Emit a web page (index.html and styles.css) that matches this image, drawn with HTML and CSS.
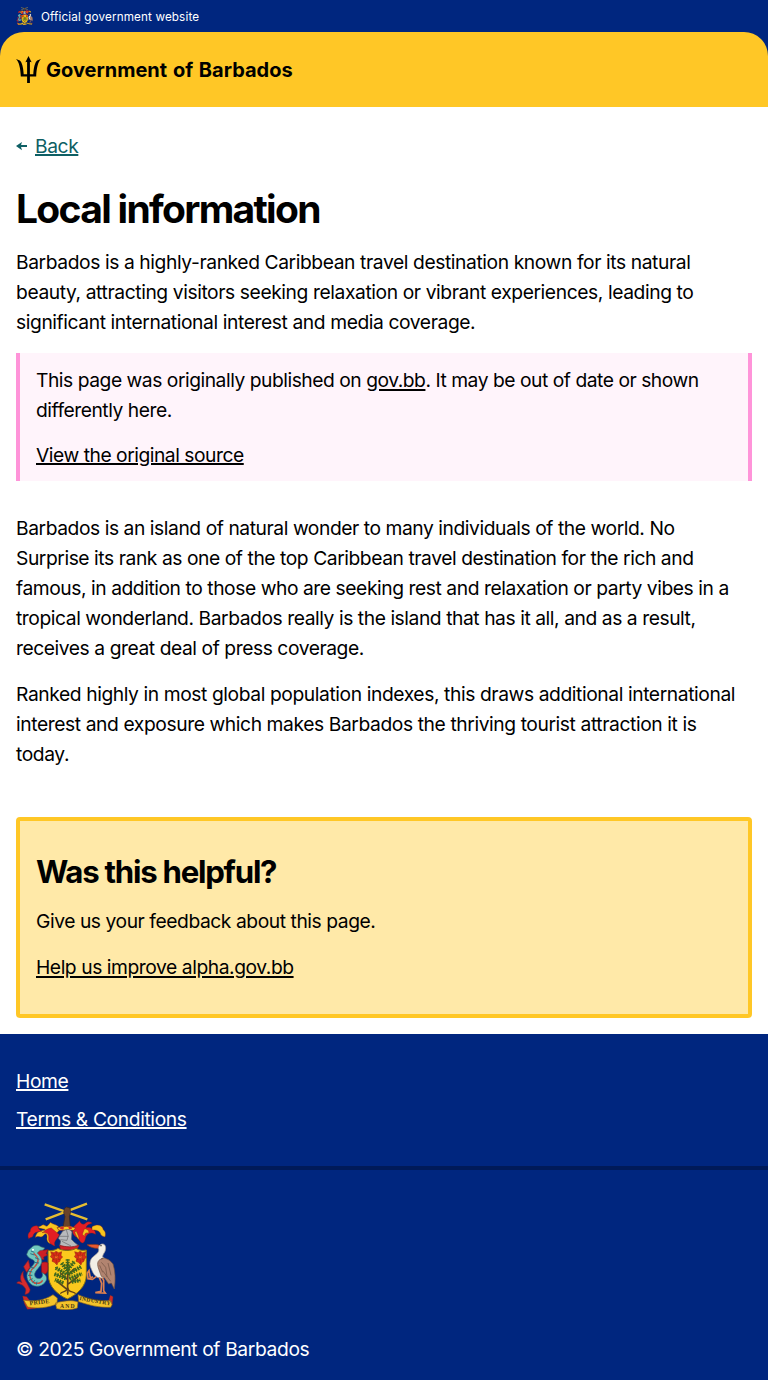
FILE: index.html
```html
<!DOCTYPE html>
<html lang="en">
<head>
<meta charset="utf-8">
<title>Local information</title>
<link rel="stylesheet" href="styles.css">
</head>
<body>
<div class="official"><svg class="mini-arms" viewBox="30 24 300 324" aria-hidden="true"><use href="#arms"/></svg><span>Official government website</span></div>
<div class="header-back"><header class="header">
  <svg class="trident" viewBox="0 0 25 27" aria-hidden="true"><path d="M12.5 0L9.4 6.3l1.7-.5v12.5H7.7C7.3 11 5.9 6.2 3.8 4.5L0 3c3 3 4.5 9 4.8 17.4h6.3V27h2.8v-6.6h6.3C20.5 12 22 6 25 3l-3.8 1.5c-2.1 1.7-3.5 6.5-3.9 13.8h-3.4V5.8l1.7.5z"/></svg>
  <span class="brand">Government of Barbados</span>
</header></div>
<main class="content">
  <nav class="back"><svg viewBox="0 0 12 10" aria-hidden="true"><path d="M0 5l6.5-4.5-1 3.3H12v2.4H5.5l1 3.3z"/></svg><a href="#">Back</a></nav>
  <h1>Local information</h1>
  <p class="lead">Barbados is a highly-ranked Caribbean travel destination known for its natural beauty, attracting visitors seeking relaxation or vibrant experiences, leading to significant international interest and media coverage.</p>
  <aside class="notice"><p>This page was originally published on <a class="low" href="#">gov.bb</a>. It may be out of date or shown differently here.</p><p><a href="#">View the original source</a></p></aside>
  <article class="article"><p>Barbados is an island of natural wonder to many individuals of the world. No Surprise its rank as one of the top Caribbean travel destination for the rich and famous, in addition to those who are seeking rest and relaxation or party vibes in a tropical wonderland. Barbados really is the island that has it all, and as a result, receives a great deal of press coverage.</p><p>Ranked highly in most global population indexes, this draws additional international interest and exposure which makes Barbados the thriving tourist attraction it is today.</p></article>
  <section class="feedback"><h2>Was this helpful?</h2><p>Give us your feedback about this page.</p><p><a class="low" href="#">Help us improve alpha.gov.bb</a></p></section>
</main>
<footer>
  <nav class="footer-links"><a href="#">Home</a><a href="#">Terms &amp; Conditions</a></nav>
  <div class="footer-bottom"><svg class="coat" viewBox="30 24 300 324" role="img" aria-label="Coat of arms"><g id="arms">
    <g stroke="#e5bd32" stroke-width="7"><path d="M116 31L244 76M119 76L243 29"/></g>
    <path d="M175 44l6-5 11 3 2 12-4 14 3 32h-22l6-32-4-12z" fill="#69432a" stroke="#38251b" stroke-width="2"/>
    <g stroke="#812018" stroke-width="1.2">
      <path d="M163 105c-9-16-25-13-29-20-7 6-9 16-18 9-8-5-10 5-20 4 5 10 20 3 23 11-14-1-29 4-31 22 10-9 17 4 25-7 6-8 11-3 10 6-2 10 4 19 11 19-1-16 10-18 16-29z" fill="#f8c51e"/>
      <path d="M95 96c-13-3-23 7-22 16-7 5-9 14-5 22 5-5 13-3 14-12 6-9 16-9 25-10-8-4-10-9-12-16zM136 102c-13 0-21 12-28 14 14-1 22 3 20 18-1 8 6 18 19 22-6-15 8-21 13-34z" fill="#e31e24"/>
      <path d="M201 105c0-11 15-16 20-25 2 10 12 14 18 7 7-5 12-4 19 0-7 4-15 4-18 14 15-2 28 4 29 20-13-6-20-5-28 5-5 9-2 17-11 21-9-1-10-12-18-17-8-4-15-14-11-25z" fill="#e31e24"/>
      <path d="M258 98c16-9 31-5 34 9 7 5 8 13 5 22-7-3-12-3-15-13-5-7-12-8-24-8zM235 105c10-1 15 6 13 13-9-4-14 2-11 10l-8-7zM211 112c5 11 9 19 8 24-5-3-11-15-13-23z" fill="#f8c51e"/>
    </g>
    <path d="M153 101q27-8 56 0l-5 8h-45z" fill="#f8c51e" stroke="#8b251b" stroke-width="2"/>
    <path d="M164 98l10 2-2 7-10-3zM187 98l9 0 2 7-9 0z" fill="#dc2926"/>
    <path d="M161 125l9-13c11-8 23-8 28 2l-2 22 9 9 14 11-18 9-40-9 3-15-7-8z" fill="#b8babd" stroke="#5d5e61" stroke-width="2"/>
    <path d="M160 127h26l-3 12-20-2M168 142l27 14M181 107l6 21" stroke="#66686b" stroke-width="2" fill="none"/>
    <path d="M161 154c18 5 39 7 58-1l-6 15h-50z" fill="#d32027" stroke="#821c20" stroke-width="2"/>
    <path d="M126 169c16 2 24-2 30-6 13 8 40 9 54 0 11 7 21 7 31 5v75c0 34-28 59-57 72-30-13-57-38-57-72z" fill="#fbc91d" stroke="#806b18" stroke-width="3"/>
    <g id="flower" fill="#d92d16" stroke="#831c10" stroke-width="1.3">
      <path d="M134 173l10 3 6-4 8 4 9-3-2 11 5 5-6 6-3 8-5 2-3 8-8-8-7-3 2-8-7-6 4-6z"/>
      <path d="M143 183l8 4 8-4-4 7 5 6-9-3-8 3 4-7z" fill="#fc6c1e"/>
      <path d="M138 176l7 6M164 176l-6 6M139 199l6-5M162 199l-5-5M151 174v8M151 196v12" fill="none"/>
    </g>
    <use href="#flower" x="72"/>
    <g fill="none" stroke="#5f421c" stroke-width="5">
      <path d="M185 298c-1-32 2-61 0-95M186 258l-23-21M184 245l22-22M185 271l30-22M183 286l-31-25"/>
      <path d="M185 280c0 16-15 10-22 19M186 283c1 13 17 8 23 16M185 282v20" stroke-width="4"/>
    </g>
    <g fill="none">
      <path d="M185 240V196M184 230l-17-23M186 226l19-23M181 241l-34-21M187 241l38-23M180 253l-35-13M190 254l38-15M172 267l-25-10M197 263l26-4" stroke="#325a1d" stroke-width="3"/>
      <path d="M185 240V196M184 230l-17-23M186 226l19-23M181 241l-34-21M187 241l38-23M180 253l-35-13M190 254l38-15M172 267l-25-10M197 263l26-4" stroke="#3d671e" stroke-width="12" stroke-dasharray="5 3"/>
    </g>
    <path d="M99 170c4-6 10-11 15-9l-2 8 14-2-6 12 6 4-13 6 1 8-14-3-4-9-14-5zM106 207c7-4 15-4 20 0-2 10 3 19-4 30-6 6-10 3-15-2z" fill="#cc1e25" stroke="#85171e" stroke-width="2"/>
    <path d="M65 174c1-8 9-10 14-16 9-7 20-4 25 0l12 4c-2 6-9 7-12 7-5 2-7 6-10 8 9 9 15 18 13 28-3 15-18 22-21 34-2 12 10 18 19 13 5-4 6-11 3-16 11 4 17 15 12 24-7 16-31 23-46 10-17-16-13-37 1-50 8-8 14-16 8-21-7-5-16-5-21-18z" fill="#70c8bf" stroke="#356b75" stroke-width="2"/>
    <path d="M83 178c17 15 17 26 3 40-16 12-19 30-8 43 7 9 24 11 32-2" stroke="#c44a3c" stroke-width="4" fill="none"/>
    <path d="M75 171l10 4M73 179l12 4M87 191l13 5M84 205l15 2M70 220l15 2M66 231l13 3M66 244l13 0M69 259l11-5M80 267l6-8M91 272l2-9" stroke="#2d7084" stroke-width="3"/>
    <circle cx="81" cy="167" r="3" fill="#fff"/>
    <path d="M65 199l-14 19 9 17 10-15zM60 266c-9-13-13-23-10-34-10 10-10 25-4 34-6-4-13-4-16 1 14 3 22 8 27 18 2 7-2 11-2 16 11-1 15-7 15-15z" transform="translate(2 0)" fill="#d72b2d" stroke="#89232b" stroke-width="2"/>
    <path d="M243 152c21-1 32-2 42 4l-8 7c-14 0-25-3-34-11z" fill="#e6572f" stroke="#823820" stroke-width="2"/>
    <path d="M279 156c9-11 20-6 20 6 0 15-10 17-9 28 14 5 22 20 19 41-4 15-13 23-25 21-14 0-22-11-28-27-8-15-4-31 8-39 11-8 17-14 13-23z" fill="#f2eee5" stroke="#a49a91" stroke-width="2"/>
    <path d="M286 194c13-4 26 4 35 16 7 22 8 46 4 75l-9-18-8 3-14-20-8-3-9-25c-5-16-1-26 13-28z" fill="#b28470" stroke="#71503e" stroke-width="2"/>
    <path d="M286 205l13 15 4 27 11 15M290 230l14 19M306 207l9 37M281 214l9 21" stroke="#6f5144" stroke-width="2" fill="none"/>
    <circle cx="285" cy="155" r="2"/>
    <path d="M261 248l-8 4-4-22-5 7 2 17 13 2 12-8M280 250l7 18-2 24-17 4 30 1-5-7 0-31-5-8" fill="none" stroke="#dd8050" stroke-width="5"/>
    <path d="M62 308l-12-2 5 22 9 18 25-3zM313 304l8 4-3 27-13-5z" fill="#cf2929" stroke="#8a3019" stroke-width="1"/>
    <path d="M53 318c30 7 67-1 88-16l13 10-1 18c-28 11-57 15-88 9zM216 302c29 12 62 21 98 18l4 12-4 8c-34 1-64-6-96-17zM148 327c25-7 51-10 68-3l-2 18c-17 6-40 7-62 2z" fill="#f4c32a" stroke="#8b651b" stroke-width="2"/>
    <g fill="#423714" font-family="Liberation Serif,serif" font-weight="bold">
      <text x="71" y="334" font-size="18" textLength="60" transform="rotate(-7 71 334)">PRIDE</text><text x="162" y="342" font-size="17" textLength="44">AND</text><text x="220" y="318" textLength="94" font-size="17" transform="rotate(10 220 318)">INDUSTRY</text>
    </g>
  </g></svg><p>© 2025 Government of Barbados</p></div>
</footer>
</body>
</html>
```
FILE: styles.css
```css
* { box-sizing: border-box; }
body { margin: 0; background: #fff; color: #000; font: 380 19.25px/30px Inter, sans-serif; letter-spacing: -0.41px; }
h1, h2, p { margin: 0; }
svg { display: block; flex: none; }
svg text { letter-spacing: 0; }
a { color: inherit; text-decoration-line: underline; text-decoration-thickness: 2px; text-underline-offset: 1px; }
.low { text-underline-offset: 2px; }
.official { display: flex; align-items: center; gap: 8px; height: 32px; padding: 0 16px; background: #00267f; color: #fff; font-size: 11.7px; line-height: 18px; letter-spacing: 0.13px; }
.official span { padding-top: 1px; }
.mini-arms { width: 17px; height: 18px; }
.header-back { background: #00267f; }
.header { display: flex; align-items: center; gap: 5px; height: 75px; padding: 0 16px; background: #ffc726; border-radius: 24px 24px 0 0; }
.trident { width: 25px; height: 27px; }
.brand { padding-top: 1px; font-size: 20px; font-weight: 700; letter-spacing: 0; word-spacing: 1px; white-space: nowrap; }
.content { padding: 24px 16px 16px; }
.back { display: flex; align-items: center; gap: 8px; color: #0e5f64; }
.back svg { width: 11px; height: 10px; fill: currentColor; }
h1 { margin-top: 25px; font-size: 39px; line-height: 46px; letter-spacing: -1.7px; }
.lead { margin-top: 15px; }
.notice { display: flex; flex-direction: column; gap: 15px; margin-top: 16px; padding: 12px 16px 11px; border: solid #ff94d9; border-width: 0 4px; background: #fff4fb; letter-spacing: -0.47px; }
.article { display: flex; flex-direction: column; gap: 16px; margin-top: 32px; }
.article p:first-child { letter-spacing: -0.44px; }
.feedback { margin-top: 48px; padding: 32px 16px; border: 4px solid #ffc726; border-radius: 4px; background: #ffe9a8; letter-spacing: -0.44px; }
h2 { margin-bottom: 15px; font-size: 31.2px; line-height: 38px; letter-spacing: -1.25px; }
.feedback p + p { margin-top: 16px; }
footer { background: #00267f; color: #fff; letter-spacing: -0.38px; }
.footer-links { display: flex; flex-direction: column; align-items: flex-start; gap: 8px; padding: 32px 16px; border-bottom: 4px solid #001a59; }
.footer-bottom { padding: 32px 16px 16px; }
.coat { width: 100px; height: 108px; margin-bottom: 24px; }
```
